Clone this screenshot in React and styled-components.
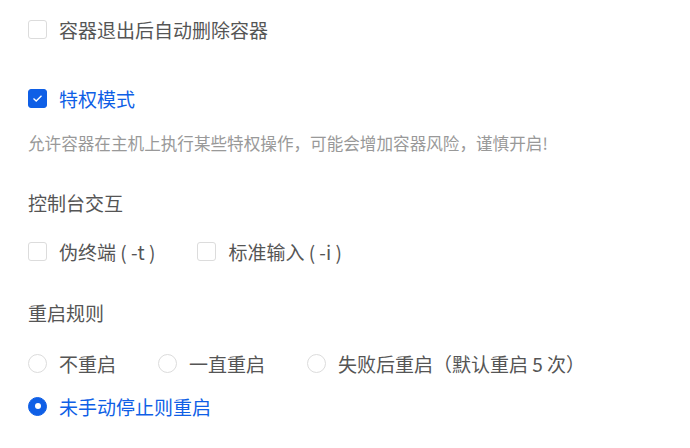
import styled, { createGlobalStyle } from 'styled-components'

const GlobalStyle = createGlobalStyle`
  html, body {
    margin: 0;
    padding: 0;
    background: #ffffff;
  }
  body {
    font-family: 'Noto Sans CJK SC', 'Noto Sans', sans-serif;
  }
`

const BLUE = '#0f5fe6'

const Page = styled.div`
  padding: 14px 28px 0;
  display: flex;
  flex-direction: column;
`

const Option = styled.label`
  display: inline-flex;
  align-items: center;
  gap: 12px;
  height: 30px;
  font-size: 19px;
  color: ${(p) => (p.$checked ? BLUE : '#555555')};
  cursor: pointer;
  white-space: nowrap;
`

const Box = styled.span`
  box-sizing: border-box;
  width: 19px;
  height: 19px;
  flex: none;
  border-radius: 3px;
  border: 1px solid ${(p) => (p.$checked ? BLUE : '#dcdcdc')};
  background: ${(p) => (p.$checked ? BLUE : '#fff')};
  display: flex;
  align-items: center;
  justify-content: center;
`

const Circle = styled(Box)`
  border-radius: 50%;
  &::after {
    content: '';
    display: ${(p) => (p.$checked ? 'block' : 'none')};
    width: 6px;
    height: 6px;
    border-radius: 50%;
    background: #fff;
  }
`

const Desc = styled.div`
  margin-top: 18px;
  font-size: 16.6px;
  line-height: 24px;
  color: #999999;
`

const Heading = styled.div`
  margin-top: ${(p) => p.$top}px;
  font-size: 19px;
  line-height: 30px;
  color: #555555;
`

const Group = styled.div`
  margin-top: ${(p) => p.$top}px;
  display: flex;
  flex-wrap: wrap;
  column-gap: 42px;
  row-gap: 13px;
`

function Check({ checked, children }) {
  return (
    <Option $checked={checked}>
      <Box $checked={checked}>
        {checked && (
          <svg width="11" height="9" viewBox="0 0 11 9" fill="none">
            <path d="M1.5 4.5 L4.2 7 L9.5 1.8" stroke="#fff" strokeWidth="1.3" />
          </svg>
        )}
      </Box>
      {children}
    </Option>
  )
}

function Radio({ checked, children }) {
  return (
    <Option $checked={checked}>
      <Circle $checked={checked} />
      {children}
    </Option>
  )
}

const restartRules = [
  { label: '不重启' },
  { label: '一直重启' },
  { label: '失败后重启（默认重启 5 次）' },
  { label: '未手动停止则重启', checked: true },
]

export default function App() {
  return (
    <>
      <GlobalStyle />
      <Page>
        <Group $top={0}>
          <Check>容器退出后自动删除容器</Check>
        </Group>
        <Group $top={39}>
          <Check checked>特权模式</Check>
        </Group>
        <Desc>允许容器在主机上执行某些特权操作，可能会增加容器风险，谨慎开启!</Desc>

        <Heading $top={33}>控制台交互</Heading>
        <Group $top={18}>
          <Check>伪终端 ( -t )</Check>
          <Check>标准输入 ( -i )</Check>
        </Group>

        <Heading $top={32}>重启规则</Heading>
        <Group $top={20}>
          {restartRules.map((r) => (
            <Radio key={r.label} checked={r.checked}>
              {r.label}
            </Radio>
          ))}
        </Group>
      </Page>
    </>
  )
}
